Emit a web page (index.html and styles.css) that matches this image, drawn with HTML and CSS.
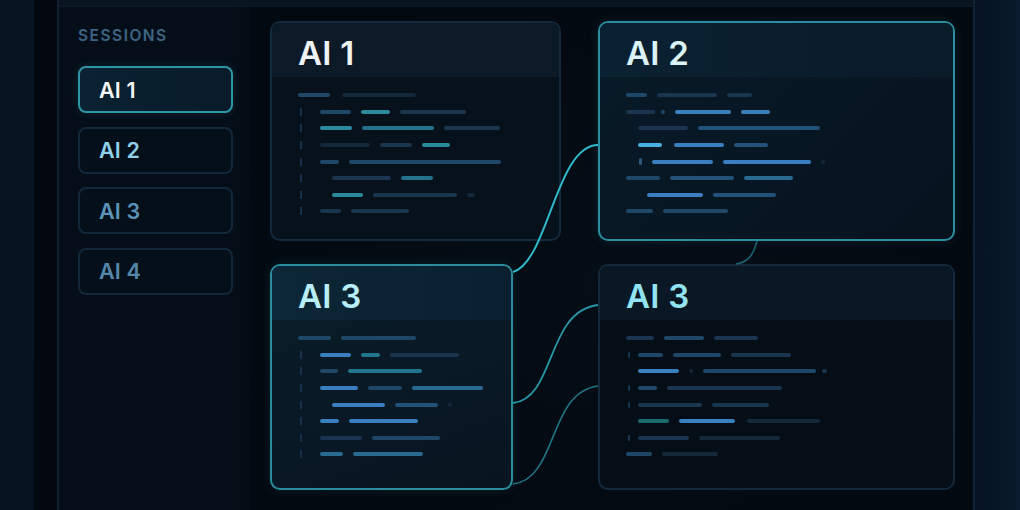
FILE: index.html
```html
<!DOCTYPE html>
<html>
<head>
<meta charset="utf-8">
<title>Sessions</title>
<link rel="stylesheet" href="styles.css">
</head>
<body>
<div class="page">
  <div class="edge-a"></div>
  <div class="edge-b"></div>
  <div class="frame">
    <div class="topbar"></div>
    <div class="work">
      <aside class="sidebar">
        <div class="sb-title">SESSIONS</div>
        <div class="sessions">
          <div class="sess active">AI 1</div>
          <div class="sess s2">AI 2</div>
          <div class="sess s3">AI 3</div>
          <div class="sess s4">AI 4</div>
        </div>
      </aside>
      <main class="canvas">
        <section class="card c1">
          <header class="card-head"><h2>AI 1</h2></header>
          <div class="code">
            <div class="ln"><b class="k3" style="width:32px"></b><b class="k1 gl" style="width:74px"></b></div>
            <div class="ln"><i class="g"></i><b class="k3" style="width:31px"></b><b class="k5" style="width:29px"></b><b class="k2" style="width:66px"></b></div>
            <div class="ln"><i class="g"></i><b class="k5" style="width:32px"></b><b class="k6" style="width:72px"></b><b class="k2" style="width:56px"></b></div>
            <div class="ln"><i class="g"></i><b class="k1" style="width:50px"></b><b class="k2" style="width:32px"></b><b class="k5" style="width:28px"></b></div>
            <div class="ln"><i class="g"></i><b class="k3" style="width:19px"></b><b class="k3" style="width:152px"></b></div>
            <div class="ln"><i class="g"></i><b class="k2 i2" style="width:59px"></b><b class="k6" style="width:32px"></b></div>
            <div class="ln"><i class="g"></i><b class="k5 i2" style="width:31px"></b><b class="k2" style="width:84px"></b><b class="k1" style="width:8px"></b></div>
            <div class="ln"><i class="g"></i><b class="k2" style="width:21px"></b><b class="k2" style="width:58px"></b></div>
          </div>
        </section>

        <section class="card c2">
          <header class="card-head"><h2>AI 2</h2></header>
          <div class="code">
            <div class="ln"><b class="k3" style="width:21px"></b><b class="k2" style="width:60px"></b><b class="k2" style="width:25px"></b></div>
            <div class="ln"><b class="k2" style="width:29px"></b><b class="k3 sg" style="width:4px"></b><b class="k7" style="width:56px"></b><b class="k7" style="width:29px"></b></div>
            <div class="ln"><b class="k2 i1" style="width:50px"></b><b class="k4" style="width:122px"></b></div>
            <div class="ln"><b class="k8 i1" style="width:24px"></b><b class="k7 wg" style="width:50px"></b><b class="k4" style="width:34px"></b></div>
            <div class="ln"><i class="tk2"></i><b class="k7" style="width:61px"></b><b class="k7" style="width:88px"></b><b class="k1" style="width:4px"></b></div>
            <div class="ln"><b class="k3" style="width:34px"></b><b class="k4" style="width:64px"></b><b class="k10" style="width:49px"></b></div>
            <div class="ln"><b class="k7 i3" style="width:56px"></b><b class="k4" style="width:63px"></b></div>
            <div class="ln"><b class="k3" style="width:27px"></b><b class="k3" style="width:65px"></b></div>
          </div>
        </section>

        <section class="card c3">
          <header class="card-head"><h2>AI 3</h2></header>
          <div class="code">
            <div class="ln"><b class="k3" style="width:33px"></b><b class="k3" style="width:75px"></b></div>
            <div class="ln"><i class="g"></i><b class="k7" style="width:31px"></b><b class="k6" style="width:19px"></b><b class="k2" style="width:69px"></b></div>
            <div class="ln"><i class="g"></i><b class="k3" style="width:18px"></b><b class="k6" style="width:74px"></b></div>
            <div class="ln"><i class="g"></i><b class="k7" style="width:38px"></b><b class="k3" style="width:34px"></b><b class="k10" style="width:71px"></b></div>
            <div class="ln"><i class="g"></i><b class="k7 i2" style="width:53px"></b><b class="k4" style="width:43px"></b><b class="k1" style="width:4px"></b></div>
            <div class="ln"><i class="g"></i><b class="k7" style="width:19px"></b><b class="k7" style="width:69px"></b></div>
            <div class="ln"><i class="g"></i><b class="k2" style="width:42px"></b><b class="k3" style="width:68px"></b></div>
            <div class="ln"><i class="g"></i><b class="k10" style="width:23px"></b><b class="k10" style="width:70px"></b></div>
          </div>
        </section>

        <section class="card c4">
          <header class="card-head"><h2>AI 3</h2></header>
          <div class="code">
            <div class="ln"><b class="k2" style="width:28px"></b><b class="k3" style="width:40px"></b><b class="k2" style="width:44px"></b></div>
            <div class="ln"><i class="tk"></i><b class="k3" style="width:25px"></b><b class="k3" style="width:48px"></b><b class="k2" style="width:60px"></b></div>
            <div class="ln"><b class="k7 i1" style="width:41px"></b><b class="k1" style="width:4px"></b><b class="k3" style="width:113px"></b><b class="k2 sg" style="width:5px"></b></div>
            <div class="ln"><i class="tk"></i><b class="k3" style="width:19px"></b><b class="k2" style="width:115px"></b></div>
            <div class="ln"><i class="tk"></i><b class="k2" style="width:64px"></b><b class="k2" style="width:57px"></b></div>
            <div class="ln"><b class="k9 i1" style="width:31px"></b><b class="k7" style="width:56px"></b><b class="k1 wg" style="width:73px"></b></div>
            <div class="ln"><i class="tk"></i><b class="k2" style="width:51px"></b><b class="k1" style="width:81px"></b></div>
            <div class="ln"><b class="k3" style="width:26px"></b><b class="k1" style="width:56px"></b></div>
          </div>
        </section>
      </main>
    </div>
  </div>
  <div class="edge-r"></div>

  <svg class="links" width="1020" height="510" viewBox="0 0 1020 510" xmlns="http://www.w3.org/2000/svg">
    <path d="M513 272 C548 262 556 145 598 145" stroke="#2fb8c8" stroke-width="2" fill="none"/>
    <path d="M513 403 C556 398 546 311 598 305" stroke="#2896a6" stroke-width="1.8" fill="none"/>
    <path d="M513 484 C558 479 548 392 598 386" stroke="#1f7484" stroke-width="1.6" fill="none"/>
    <path d="M757 241 C753 256 748 262 736 264" stroke="#1b5f70" stroke-width="1.6" fill="none"/>
  </svg>
</div>
</body>
</html>
```

FILE: styles.css
```css
* { box-sizing: border-box; margin: 0; padding: 0; }

html, body {
  width: 1020px;
  height: 510px;
  overflow: hidden;
  background: #030a12;
}

body {
  font-family: Inter, "Noto Sans", "Liberation Sans", sans-serif;
}

.page {
  position: relative;
  display: flex;
  width: 1020px;
  height: 510px;
}

.edge-a {
  width: 34px;
  flex: none;
  background: linear-gradient(180deg, #071422 0%, #061220 100%);
}

.edge-b {
  width: 23px;
  flex: none;
  background: #02080e;
}

.frame {
  width: 916px;
  flex: none;
  border-left: 2px solid #0e2132;
  display: flex;
  flex-direction: column;
  background: #040b13;
}

.topbar {
  height: 7px;
  flex: none;
  background: #0a1522;
  border-bottom: 1px solid #0c1b29;
}

.work {
  flex: 1;
  display: flex;
}

/* Sidebar */
.sidebar {
  width: 191px;
  flex: none;
  padding: 20px 0 0 19px;
  background: linear-gradient(90deg, #050e18 0%, #050e18 90%, #040b14 100%);
}

.sb-title {
  font-size: 15.5px;
  line-height: 18px;
  font-weight: 600;
  letter-spacing: 1.5px;
  color: #3d6484;
}

.sessions {
  margin-top: 21px;
  display: flex;
  flex-direction: column;
  gap: 13.5px;
  width: 155px;
}

.sess {
  height: 47px;
  border: 2px solid #12273a;
  border-radius: 8px;
  background: #050f1a;
  display: flex;
  align-items: center;
  padding-left: 19px;
  font-size: 21.5px;
  font-weight: 600;
  letter-spacing: 0.2px;
}

.sess.active {
  border-color: #2e95a6;
  background: linear-gradient(90deg, #0a2232 0%, #091b29 100%);
  color: #f2f6f8;
  box-shadow: 0 0 8px rgba(46, 149, 166, 0.18);
}

.sess.s2 { color: #8fd0ea; }
.sess.s3 { color: #5b93b9; }
.sess.s4 { color: #5387aa; }

/* Canvas */
.canvas {
  flex: 1;
  padding: 14px 0 0 20px;
  display: grid;
  grid-template-columns: 291px 357px;
  grid-template-rows: 220px 226px;
  column-gap: 37px;
  row-gap: 23px;
  align-content: start;
  background: radial-gradient(ellipse at 50% 55%, #050d16 0%, #030910 80%);
}

.card {
  border: 2px solid #15293c;
  border-radius: 10px;
  overflow: hidden;
  display: flex;
  flex-direction: column;
  background: #07111b;
}

.card-head {
  height: 54px;
  flex: none;
  padding: 13.5px 0 0 26px;
  background: #0c1a28;
}

.card-head h2 {
  font-size: 33px;
  line-height: 33px;
  font-weight: 600;
  letter-spacing: 0.3px;
}

.c1 .card-head h2 { color: #eef3f6; }

.c2 {
  border-color: #2b8e9f;
  background: linear-gradient(135deg, #081a28 0%, #07131f 100%);
  box-shadow: 0 0 12px rgba(43, 142, 159, 0.16);
}
.c2 .card-head { background: linear-gradient(90deg, #0b2131 0%, #0a1b2a 100%); }
.c2 .card-head h2 { color: #dbf3f7; }

.c3 {
  width: 243px;
  border-color: #2a8c9c;
  background: linear-gradient(160deg, #0a1d2a 0%, #081521 100%);
  box-shadow: 0 0 12px rgba(42, 140, 156, 0.16);
}
.c3 .card-head { background: linear-gradient(90deg, #0c2737 0%, #0a2030 100%); }
.c3 .card-head h2 { color: #b8eef6; }

.c4 {
  border-color: #15293c;
  background: #050d17;
}
.c4 .card-head { background: #0a1725; }
.c4 .card-head h2 { color: #92e4f0; }

/* Code lines */
.code {
  padding: 10px 0 0 26px;
}

.ln {
  height: 16.6px;
  display: flex;
  align-items: center;
  gap: 10px;
}

.ln b {
  display: block;
  height: 4px;
  border-radius: 2px;
  flex: none;
}

.ln .g {
  display: block;
  width: 2px;
  height: 8px;
  margin-left: 2px;
  margin-right: 8px;
  background: #17304a;
  flex: none;
}

.ln .tk {
  display: block;
  width: 2px;
  height: 6px;
  margin-left: 2px;
  margin-right: -2px;
  background: #1a3550;
  border-radius: 1px;
  flex: none;
}

.ln .tk2 {
  display: block;
  width: 3px;
  height: 7px;
  margin-left: 13px;
  background: #2a5a80;
  border-radius: 1.5px;
  flex: none;
}

.i1 { margin-left: 12px; }
.i2 { margin-left: 12px; }
.i3 { margin-left: 21px; }
.gl { margin-left: 2px; }
.sg { margin-left: -4px; }
.wg { margin-left: 2px; }

.k1 { background: #14283c; }
.k2 { background: #1a3550; }
.k3 { background: #1f4868; }
.k4 { background: #22527a; }
.k5 { background: #2a8a9c; }
.k6 { background: #22748c; }
.k7 { background: #3a80c0; }
.k8 { background: #4aaee0; }
.k9 { background: #1d6a6c; }
.k10 { background: #2a6a90; }

/* Connectors */
.links {
  position: absolute;
  left: 0;
  top: 0;
  pointer-events: none;
}

.edge-r {
  width: 47px;
  flex: none;
  border-left: 2px solid #0f2236;
  background: linear-gradient(90deg, #061322 0%, #081a2b 100%);
}
```
